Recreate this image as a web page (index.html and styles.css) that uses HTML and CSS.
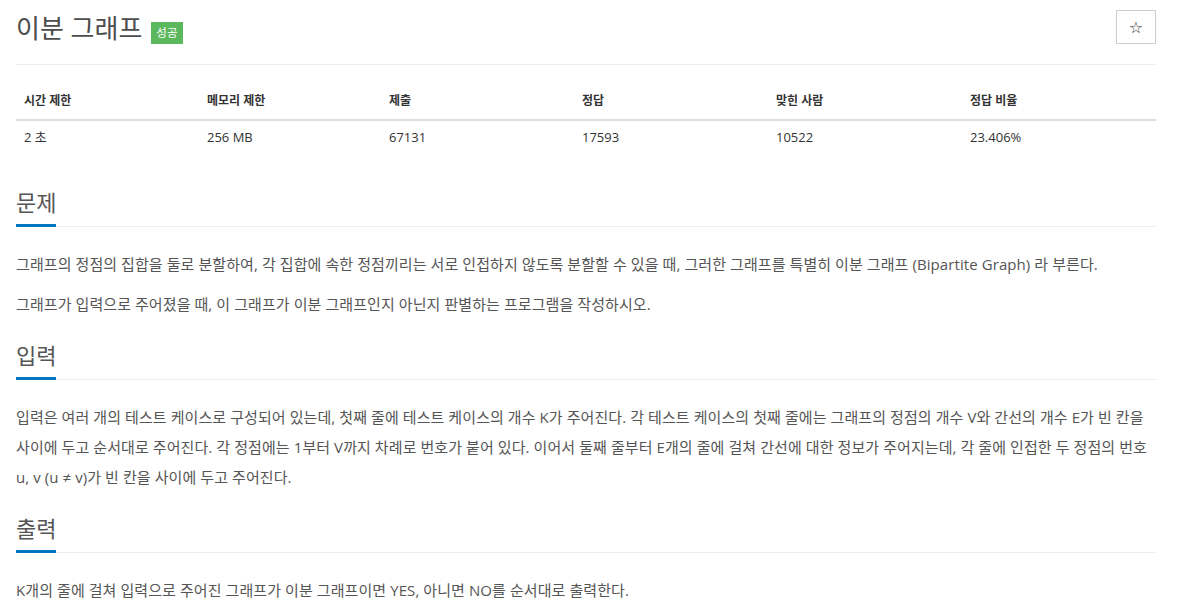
FILE: index.html
```html
<!DOCTYPE html>
<html lang="ko">
<head>
    <meta charset="UTF-8">
    <title>이분 그래프</title>
    <link rel="stylesheet" href="styles.css">
</head>
<body>

<div class="container">
    <div class="page-header">
        <h1 class="title">이분 그래프 <span class="badge">성공</span></h1>
        <button class="star" title="즐겨찾기">&#9734;</button>
    </div>

    <table class="info">
        <colgroup>
            <col class="c1">
            <col class="c2">
            <col class="c3">
            <col class="c4">
            <col class="c5">
            <col class="c6">
        </colgroup>
        <thead>
            <tr>
                <th>시간 제한</th>
                <th>메모리 제한</th>
                <th>제출</th>
                <th>정답</th>
                <th>맞힌 사람</th>
                <th>정답 비율</th>
            </tr>
        </thead>
        <tbody>
            <tr>
                <td>2 초</td>
                <td>256 MB</td>
                <td>67131</td>
                <td>17593</td>
                <td>10522</td>
                <td>23.406%</td>
            </tr>
        </tbody>
    </table>

    <section class="problem-section">
        <div class="headline"><h2>문제</h2></div>
        <p>그래프의 정점의 집합을 둘로 분할하여, 각 집합에 속한 정점끼리는 서로 인접하지 않도록 분할할 수 있을 때, 그러한 그래프를 특별히 이분 그래프 (Bipartite Graph) 라 부른다.</p>
        <p>그래프가 입력으로 주어졌을 때, 이 그래프가 이분 그래프인지 아닌지 판별하는 프로그램을 작성하시오.</p>
    </section>

    <section class="problem-section">
        <div class="headline"><h2>입력</h2></div>
        <p>입력은 여러 개의 테스트 케이스로 구성되어 있는데, 첫째 줄에 테스트 케이스의 개수 K가 주어진다. 각 테스트 케이스의 첫째 줄에는 그래프의 정점의 개수 V와 간선의 개수 E가 빈 칸을 사이에 두고 순서대로 주어진다. 각 정점에는 1부터 V까지 차례로 번호가 붙어 있다. 이어서 둘째 줄부터 E개의 줄에 걸쳐 간선에 대한 정보가 주어지는데, 각 줄에 인접한 두 정점의 번호 u, v (u ≠ v)가 빈 칸을 사이에 두고 주어진다.</p>
    </section>

    <section class="problem-section">
        <div class="headline"><h2>출력</h2></div>
        <p>K개의 줄에 걸쳐 입력으로 주어진 그래프가 이분 그래프이면 YES, 아니면 NO를 순서대로 출력한다.</p>
    </section>
</div>

</body>
</html>
```

FILE: styles.css
```css
body {
    margin: 0;
    background-color: #fff;
    color: #555;
    font-family: "Open Sans", "Noto Sans CJK KR", sans-serif;
    font-size: 14px;
}
.container {
    width: 1140px;
    padding: 0 16px;
}
.page-header {
    display: flex;
    justify-content: space-between;
    align-items: flex-start;
    padding-top: 8px;
    padding-bottom: 16px;
    border-bottom: 1px solid #eee;
    margin-bottom: 18px;
}
.title {
    margin: 0;
    font-size: 26px;
    font-weight: 400;
    color: #4c4c4c;
    line-height: 40px;
    display: flex;
    align-items: flex-start;
    gap: 9px;
}
.badge {
    display: inline-block;
    background-color: #5cb85c;
    color: #fff;
    font-size: 11.5px;
    line-height: 22px;
    padding: 0 5px;
    margin-top: 14px;
}
.star {
    width: 40px;
    height: 34px;
    margin-top: 2px;
    background: #fff;
    border: 1px solid #ccc;
    font-size: 16px;
    color: #333;
    cursor: pointer;
    font-family: "DejaVu Sans", sans-serif;
}
.info {
    width: 100%;
    table-layout: fixed;
    border-collapse: collapse;
    font-size: 13px;
    color: #333;
    margin-bottom: 31px;
}
.info .c1 { width: 183px; }
.info .c2 { width: 182px; }
.info .c3 { width: 193px; }
.info .c4 { width: 194px; }
.info .c5 { width: 194px; }
.info .c6 { width: 194px; }
.info th {
    text-align: left;
    font-size: 12px;
    font-weight: 700;
    padding: 8px;
    line-height: 20px;
    border-bottom: 2px solid #ddd;
}
.info td {
    padding: 7px 8px;
    line-height: 18px;
}
.problem-section {
    padding-bottom: 8px;
}
.headline {
    display: flex;
    border-bottom: 1px dotted #ddd;
    margin-bottom: 22px;
}
.headline h2 {
    margin: 0 0 -1px;
    font-size: 22px;
    font-weight: 400;
    color: #555;
    line-height: 36px;
    padding-bottom: 4px;
    border-bottom: 3px solid #0076c0;
}
.problem-section p {
    margin: 0 0 10px;
    font-size: 15px;
    line-height: 30px;
    letter-spacing: 0.08px;
    word-break: keep-all;
}
```
